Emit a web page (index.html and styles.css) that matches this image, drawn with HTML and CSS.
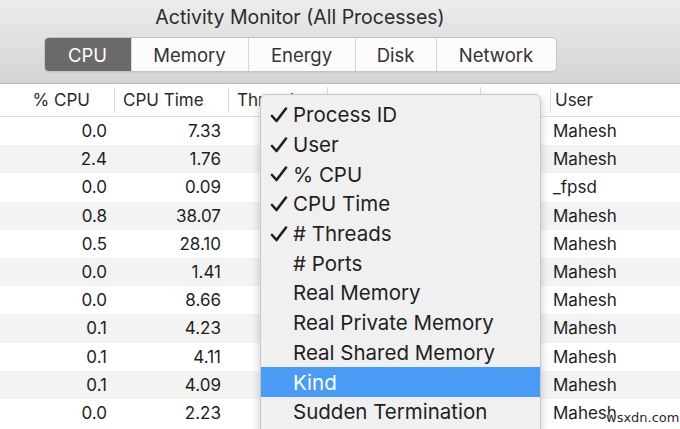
FILE: index.html
```html
<!DOCTYPE html>
<html lang="en">
<head>
<meta charset="utf-8">
<title>Activity Monitor</title>
<link rel="stylesheet" href="styles.css">
</head>
<body>
<div class="window">
  <header class="toolbar">
    <div class="toolbar-inner">
      <div class="title">Activity Monitor (All Processes)</div>
      <nav class="segmented">
        <span class="seg seg-cpu active">CPU</span>
        <span class="seg seg-mem">Memory</span>
        <span class="seg seg-energy">Energy</span>
        <span class="seg seg-disk">Disk</span>
        <span class="seg seg-net">Network</span>
      </nav>
    </div>
  </header>

  <div class="table">
    <div class="row head">
      <div class="cell num first">% CPU</div>
      <div class="cell">CPU Time</div>
      <div class="cell">Threads</div>
      <div class="cell"></div>
      <div class="cell"></div>
      <div class="cell">User</div>
    </div>
    <div class="row"><div class="cell num">0.0</div><div class="cell num">7.33</div><div class="cell"></div><div class="cell"></div><div class="cell"></div><div class="cell">Mahesh</div></div>
    <div class="row"><div class="cell num">2.4</div><div class="cell num">1.76</div><div class="cell"></div><div class="cell"></div><div class="cell"></div><div class="cell">Mahesh</div></div>
    <div class="row"><div class="cell num">0.0</div><div class="cell num">0.09</div><div class="cell"></div><div class="cell"></div><div class="cell"></div><div class="cell">_fpsd</div></div>
    <div class="row"><div class="cell num">0.8</div><div class="cell num">38.07</div><div class="cell"></div><div class="cell"></div><div class="cell"></div><div class="cell">Mahesh</div></div>
    <div class="row"><div class="cell num">0.5</div><div class="cell num">28.10</div><div class="cell"></div><div class="cell"></div><div class="cell"></div><div class="cell">Mahesh</div></div>
    <div class="row"><div class="cell num">0.0</div><div class="cell num">1.41</div><div class="cell"></div><div class="cell"></div><div class="cell"></div><div class="cell">Mahesh</div></div>
    <div class="row"><div class="cell num">0.0</div><div class="cell num">8.66</div><div class="cell"></div><div class="cell"></div><div class="cell"></div><div class="cell">Mahesh</div></div>
    <div class="row"><div class="cell num">0.1</div><div class="cell num">4.23</div><div class="cell"></div><div class="cell"></div><div class="cell"></div><div class="cell">Mahesh</div></div>
    <div class="row"><div class="cell num">0.1</div><div class="cell num">4.11</div><div class="cell"></div><div class="cell"></div><div class="cell"></div><div class="cell">Mahesh</div></div>
    <div class="row"><div class="cell num">0.1</div><div class="cell num">4.09</div><div class="cell"></div><div class="cell"></div><div class="cell"></div><div class="cell">Mahesh</div></div>
    <div class="row"><div class="cell num">0.0</div><div class="cell num">2.23</div><div class="cell"></div><div class="cell"></div><div class="cell"></div><div class="cell">Mahesh</div></div>
  </div>

  <ul class="menu">
    <li class="item"><svg class="check" viewBox="0 0 18 16" width="18" height="16"><path d="M2 9 L6.5 14 L16 1.5" /></svg>Process ID</li>
    <li class="item"><svg class="check" viewBox="0 0 18 16" width="18" height="16"><path d="M2 9 L6.5 14 L16 1.5" /></svg>User</li>
    <li class="item"><svg class="check" viewBox="0 0 18 16" width="18" height="16"><path d="M2 9 L6.5 14 L16 1.5" /></svg>% CPU</li>
    <li class="item"><svg class="check" viewBox="0 0 18 16" width="18" height="16"><path d="M2 9 L6.5 14 L16 1.5" /></svg>CPU Time</li>
    <li class="item"><svg class="check" viewBox="0 0 18 16" width="18" height="16"><path d="M2 9 L6.5 14 L16 1.5" /></svg># Threads</li>
    <li class="item"><span class="check"></span># Ports</li>
    <li class="item"><span class="check"></span>Real Memory</li>
    <li class="item"><span class="check"></span>Real Private Memory</li>
    <li class="item"><span class="check"></span>Real Shared Memory</li>
    <li class="item selected"><span class="check"></span>Kind</li>
    <li class="item"><span class="check"></span>Sudden Termination</li>
  </ul>

  <div class="watermark">wsxdn.com</div>
</div>
</body>
</html>
```

FILE: styles.css
```css
* { box-sizing: border-box; }

html, body {
  margin: 0;
  padding: 0;
  width: 680px;
  height: 429px;
  overflow: hidden;
  background: #ffffff;
}

.window {
  position: relative;
  width: 680px;
  height: 429px;
  overflow: hidden;
  font-family: Inter, Roboto, "Noto Sans", sans-serif;
  color: #1e1e1e;
}

/* ---- toolbar ---- */
.toolbar {
  height: 84px;
  background: linear-gradient(#ececec, #d4d4d4);
  border-bottom: 1px solid #b9b9b9;
}

.toolbar-inner {
  width: 600px;
  display: flex;
  flex-direction: column;
  align-items: center;
}

.title {
  margin-top: 5px;
  height: 24px;
  font-size: 19.5px;
  line-height: 24px;
  color: #2b2b2b;
}

.segmented {
  margin-top: 8px;
  display: flex;
  height: 35px;
  background: #fcfcfc;
  border: 1px solid #c4c4c4;
  border-radius: 5px;
  box-shadow: 0 1px 0 rgba(0, 0, 0, 0.05);
}

.seg {
  display: flex;
  align-items: center;
  justify-content: center;
  font-size: 18.5px;
  color: #333333;
  border-left: 1px solid #d8d8d8;
}

.seg:first-child { border-left: none; }

.seg.active {
  background: #6a6a6a;
  color: #ffffff;
  border-radius: 4px 0 0 4px;
}

.seg-cpu { width: 86px; }
.seg-mem { width: 117px; }
.seg-energy { width: 107px; }
.seg-disk { width: 81px; }
.seg-net { width: 120px; }

/* ---- process table ---- */
.table {
  display: flex;
  flex-direction: column;
}

.row {
  display: grid;
  grid-template-columns: 114px 114px 99px 153px 70px 1fr;
  height: 28.2px;
  align-items: center;
  font-size: 17px;
}

.row:nth-child(odd) { background: #f3f3f3; }
.row.head {
  height: 33px;
  background: #ffffff;
  border-bottom: 1px solid #dedede;
  font-size: 17px;
  color: #2a2a2a;
}

.cell {
  white-space: nowrap;
  overflow: hidden;
  padding-left: 10px;
}

.cell.num {
  text-align: right;
  padding-left: 0;
  padding-right: 7px;
}

.head .cell {
  position: relative;
  height: 100%;
  line-height: 33px;
  padding-left: 9px;
}

.head .cell.first {
  padding-right: 24px;
}

.head .cell + .cell::before {
  content: "";
  position: absolute;
  left: 0;
  top: 3px;
  bottom: 3px;
  border-left: 1px solid #dcdcdc;
}

.row .cell:last-child { padding-left: 3px; }
.head .cell:last-child { padding-left: 5px; }

/* ---- column picker menu ---- */
.menu {
  position: absolute;
  left: 260px;
  top: 94px;
  width: 281px;
  height: 360px;
  margin: 0;
  padding: 5px 0 0 0;
  list-style: none;
  background: #f0f0f0;
  border: 1px solid #c9c9c9;
  border-radius: 6px;
  box-shadow: 0 3px 10px rgba(0, 0, 0, 0.22);
}

.item {
  display: flex;
  align-items: center;
  height: 29.7px;
  padding-left: 9px;
  font-size: 20.5px;
  color: #1f1f1f;
}

.item.selected {
  background: #4a9bf5;
  color: #ffffff;
}

.check {
  width: 18px;
  height: 16px;
  margin-right: 5px;
  flex: none;
}

.check path {
  fill: none;
  stroke: #1f1f1f;
  stroke-width: 2.6;
  stroke-linecap: round;
  stroke-linejoin: round;
}

/* ---- site mark ---- */
.watermark {
  position: absolute;
  left: 606px;
  top: 410px;
  font-family: "DejaVu Sans", sans-serif;
  font-size: 13px;
  color: #2a2a2a;
  text-shadow: 0 0 2px #ffffff, 0 0 2px #ffffff;
}
```
